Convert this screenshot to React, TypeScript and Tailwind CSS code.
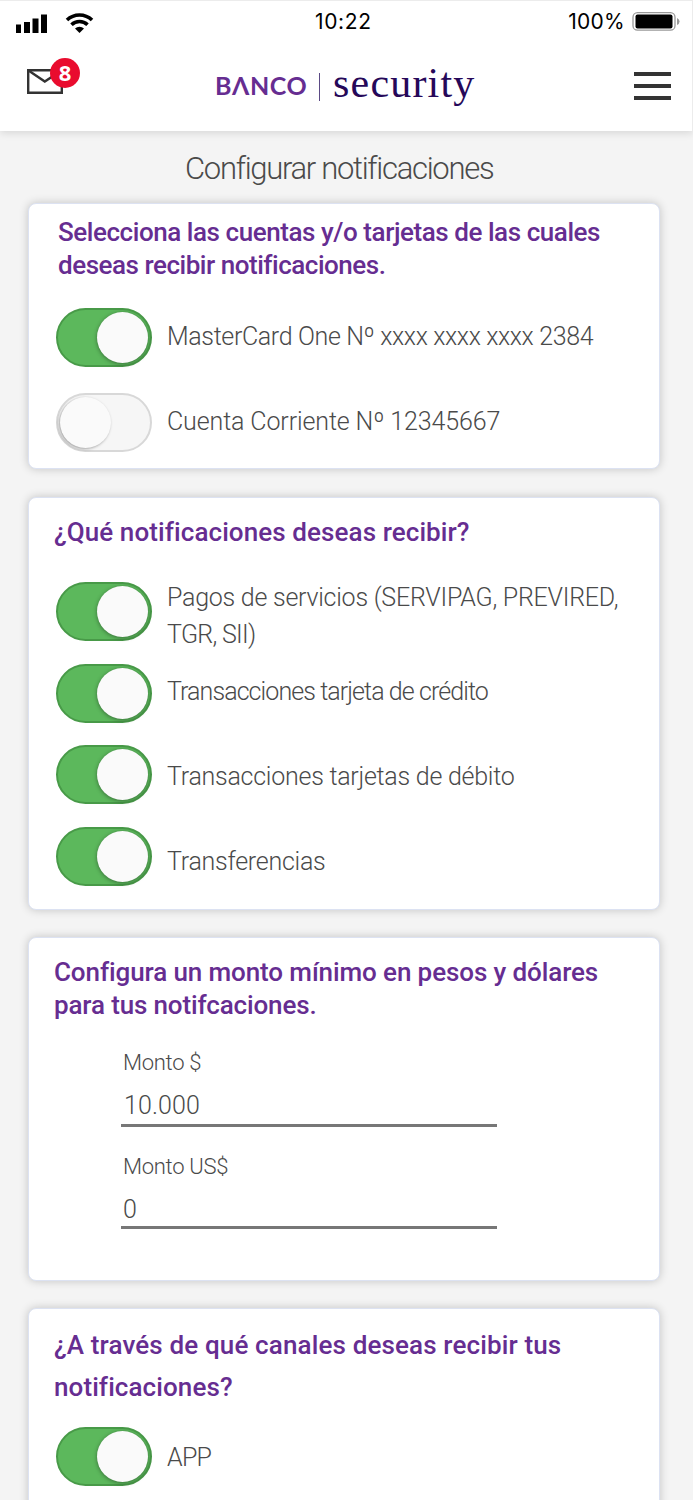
import { useState } from 'react'
import clsx from 'clsx'

const services = [
  { id: 'pagos', lines: ['Pagos de servicios (SERVIPAG, PREVIRED,', 'TGR, SII)'], height: 'h-[82px]', offset: '-mt-[3px]', tracking: ['tracking-[-0.25px]', 'tracking-[-0.7px]'] },
  { id: 'credito', lines: ['Transacciones tarjeta de crédito'], height: 'h-[81px]', offset: 'mt-[9px]', tracking: ['tracking-[-0.92px]'] },
  { id: 'debito', lines: ['Transacciones tarjetas de débito'], height: 'h-[82px]', offset: 'mt-[13px]', tracking: ['tracking-[-0.26px]'] },
  { id: 'transferencias', lines: ['Transferencias'], height: 'h-[60px]', offset: 'mt-[16px]', tracking: ['tracking-[-0.26px]'] },
]

function Toggle({ initial = true }: { initial?: boolean }) {
  const [on, setOn] = useState(initial)

  return (
    <button
      role="switch"
      aria-checked={on}
      onClick={() => setOn(!on)}
      className={clsx(
        'flex h-[59px] w-24 shrink-0 items-center rounded-full border-2 px-[2px]',
        on ? 'justify-end border-[#489a48] bg-[#5cb85c]' : 'justify-start border-[#d8d8d8] bg-[#f6f6f6]',
      )}
    >
      <span
        className={clsx(
          'h-[51px] w-[51px] rounded-full bg-[#fafafa]',
          on ? 'shadow-[0_1px_4px_rgba(0,0,0,0.4)]' : 'shadow-[-1px_1px_3px_rgba(0,0,0,0.35)]',
        )}
      />
    </button>
  )
}

function Row({ lines, height, offset, tracking, initial }: {
  lines: string[]
  height: string
  offset: string
  tracking: string[]
  initial?: boolean
}) {
  return (
    <div className={clsx('flex items-start gap-[15px]', height)}>
      <Toggle initial={initial} />
      <div className={clsx('text-[25px] leading-[37px] font-light whitespace-nowrap', offset)}>
        {lines.map((line, i) => (
          <p key={line} className={tracking[i]}>{line}</p>
        ))}
      </div>
    </div>
  )
}

function Card({ className, children }: { className: string; children: React.ReactNode }) {
  return (
    <section
      className={clsx(
        'mx-7 w-[632px] rounded-lg border border-[#dce2f2] bg-white pl-[27px] shadow-[0_0_10px_rgba(0,0,0,0.2)]',
        className,
      )}
    >
      {children}
    </section>
  )
}

function StatusBar() {
  return (
    <div className="flex h-[42px] items-center pl-4 font-['Inter'] text-[21px] text-black">
      <svg width="80" height="24" viewBox="0 0 80 24">
        <path d="M0 14.500h5V23H0zM8 12h6v11H8zM16.500 8.500h6V23h-6zM25 4.500h6V23h-6z" fill="#000" />
        <g fill="none" stroke="#000" strokeWidth="3.600">
          <path d="M51 10a18 18 0 0 1 25 0" />
          <path d="M55.500 14.800a11.500 11.500 0 0 1 16 0" />
        </g>
        <path d="M63.500 23l-4.500-4.500a6.500 6.500 0 0 1 9 0z" fill="#000" />
      </svg>
      <span className="ml-[219px] tracking-[0.65px]">10:22</span>
      <span className="ml-auto tracking-[0.3px]">100%</span>
      <svg className="mr-3 ml-[7px]" width="48" height="20" viewBox="0 0 48 20">
        <rect x="1" y="0.700" width="42" height="17.500" rx="4.500" fill="#fff" stroke="#999" strokeWidth="1.300" />
        <rect x="3.500" y="2.500" width="37" height="14" rx="2" fill="#000" />
        <path d="M45 6q2.500 1 2.500 3.500t-2.500 3.500z" fill="#999" />
      </svg>
    </div>
  )
}

export default function App() {
  return (
    <div className="h-[1500px] w-[693px] overflow-hidden bg-[#f4f4f4] font-['Roboto',sans-serif] text-[#4a4a4a]">
      <header className="relative h-[131px] border-t border-r border-[#ececec] bg-white shadow-[0_2px_8px_rgba(0,0,0,0.12)]">
        <StatusBar />
        <div className="flex items-start pt-[2px]">
          <div className="relative ml-[27px] h-12 w-14 pt-6">
            <svg width="36" height="25" viewBox="0 0 36 25" fill="none" stroke="#333" strokeWidth="2.400">
              <path d="M1.200 1.200h33.600v22.600H1.200z" />
              <path d="M1.500 1.500L17.800 12.500L34.500 1.500" />
            </svg>
            <span className="absolute top-[13px] left-[23px] flex h-[30px] w-[30px] items-center justify-center rounded-full bg-[#e90c2e] pb-[2px] font-['Open_Sans'] text-[22px] font-bold text-white">
              8
            </span>
          </div>
          <div className="ml-[132px] flex h-[76px] items-start whitespace-nowrap">
            <span className="mt-[22px] w-[104px] font-['Lato'] text-[25px] leading-[36px] font-bold tracking-[0.6px] text-[#662d91]">BΛNCO</span>
            <span className="mt-7 h-7 w-px bg-[#5b4a85]" />
            <span className="mt-[15px] ml-[13px] font-['Liberation_Serif'] text-[42px] leading-[46px] tracking-[1.200px] text-[#260859]">security</span>
          </div>
          <div className="mt-[27px] mr-[21px] ml-auto flex w-[37px] flex-col gap-2">
            <span className="h-1 bg-[#333]" />
            <span className="h-1 bg-[#333]" />
            <span className="h-1 bg-[#333]" />
          </div>
        </div>
      </header>

      <h1 className="h-[72px] pt-[18px] pl-[185px] text-[31px] leading-[40px] font-light tracking-[-1.300px]">Configurar notificaciones</h1>

      <Card className="h-[266px] pt-[12px]">
        <h2 className="mb-[26px] pl-[2px] text-[26px] leading-[33px] font-medium whitespace-nowrap text-[#662d91]">
          <span className="block tracking-[-0.44px]">Selecciona las cuentas y/o tarjetas de las cuales</span>
          <span className="block tracking-[-0.47px]">deseas recibir notificaciones.</span>
        </h2>
        <Row lines={['MasterCard One Nº xxxx xxxx xxxx 2384']} height="h-[85px]" offset="mt-[10px]" tracking={['tracking-[-0.36px]']} />
        <Row lines={['Cuenta Corriente Nº 12345667']} height="h-[60px]" offset="mt-[10px]" tracking={['tracking-[-0.12px]']} initial={false} />
      </Card>

      <Card className="mt-7 h-[413px] pt-[18px]">
        <h2 className="mb-[33px] -ml-[2px] text-[26px] leading-[33px] font-medium tracking-[0.09px] whitespace-nowrap text-[#662d91]">
          ¿Qué notificaciones deseas recibir?
        </h2>
        {services.map(({ id, ...service }) => (
          <Row key={id} {...service} />
        ))}
      </Card>

      <Card className="mt-[27px] h-[344px] pt-[18px]">
        <h2 className="-ml-[2px] text-[26px] leading-[33px] font-medium whitespace-nowrap text-[#662d91]">
          <span className="block tracking-[-0.1px]">Configura un monto mínimo en pesos y dólares</span>
          <span className="block tracking-[-0.14px]">para tus notifcaciones.</span>
        </h2>
        <div className="mt-[26px] ml-[65px] w-[376px] font-light">
          <p className="pl-[2px] text-[22px] leading-[30px] tracking-[-0.3px]">Monto $</p>
          <p className="mt-[8px] h-[41px] border-b-3 border-[#777] pl-[3px] text-[25px] leading-[40px] tracking-[0.1px]">10.000</p>
          <p className="mt-[25px] pl-[2px] text-[22px] leading-[30px] tracking-[-0.3px]">Monto US$</p>
          <p className="mt-[7px] h-[40px] border-b-3 border-[#777] pl-[2px] text-[25px] leading-[42px]">0</p>
        </div>
      </Card>

      <Card className="mt-[27px] h-[344px] pt-[15px]">
        <h2 className="mb-[19px] -ml-[2px] text-[26px] leading-[42px] font-medium whitespace-nowrap text-[#662d91]">
          <span className="block tracking-[0.14px]">¿A través de qué canales deseas recibir tus</span>
          <span className="block tracking-[0.09px]">notificaciones?</span>
        </h2>
        <Row lines={['APP']} height="h-[82px]" offset="mt-[12px]" tracking={['tracking-[-0.7px]']} />
      </Card>
    </div>
  )
}
